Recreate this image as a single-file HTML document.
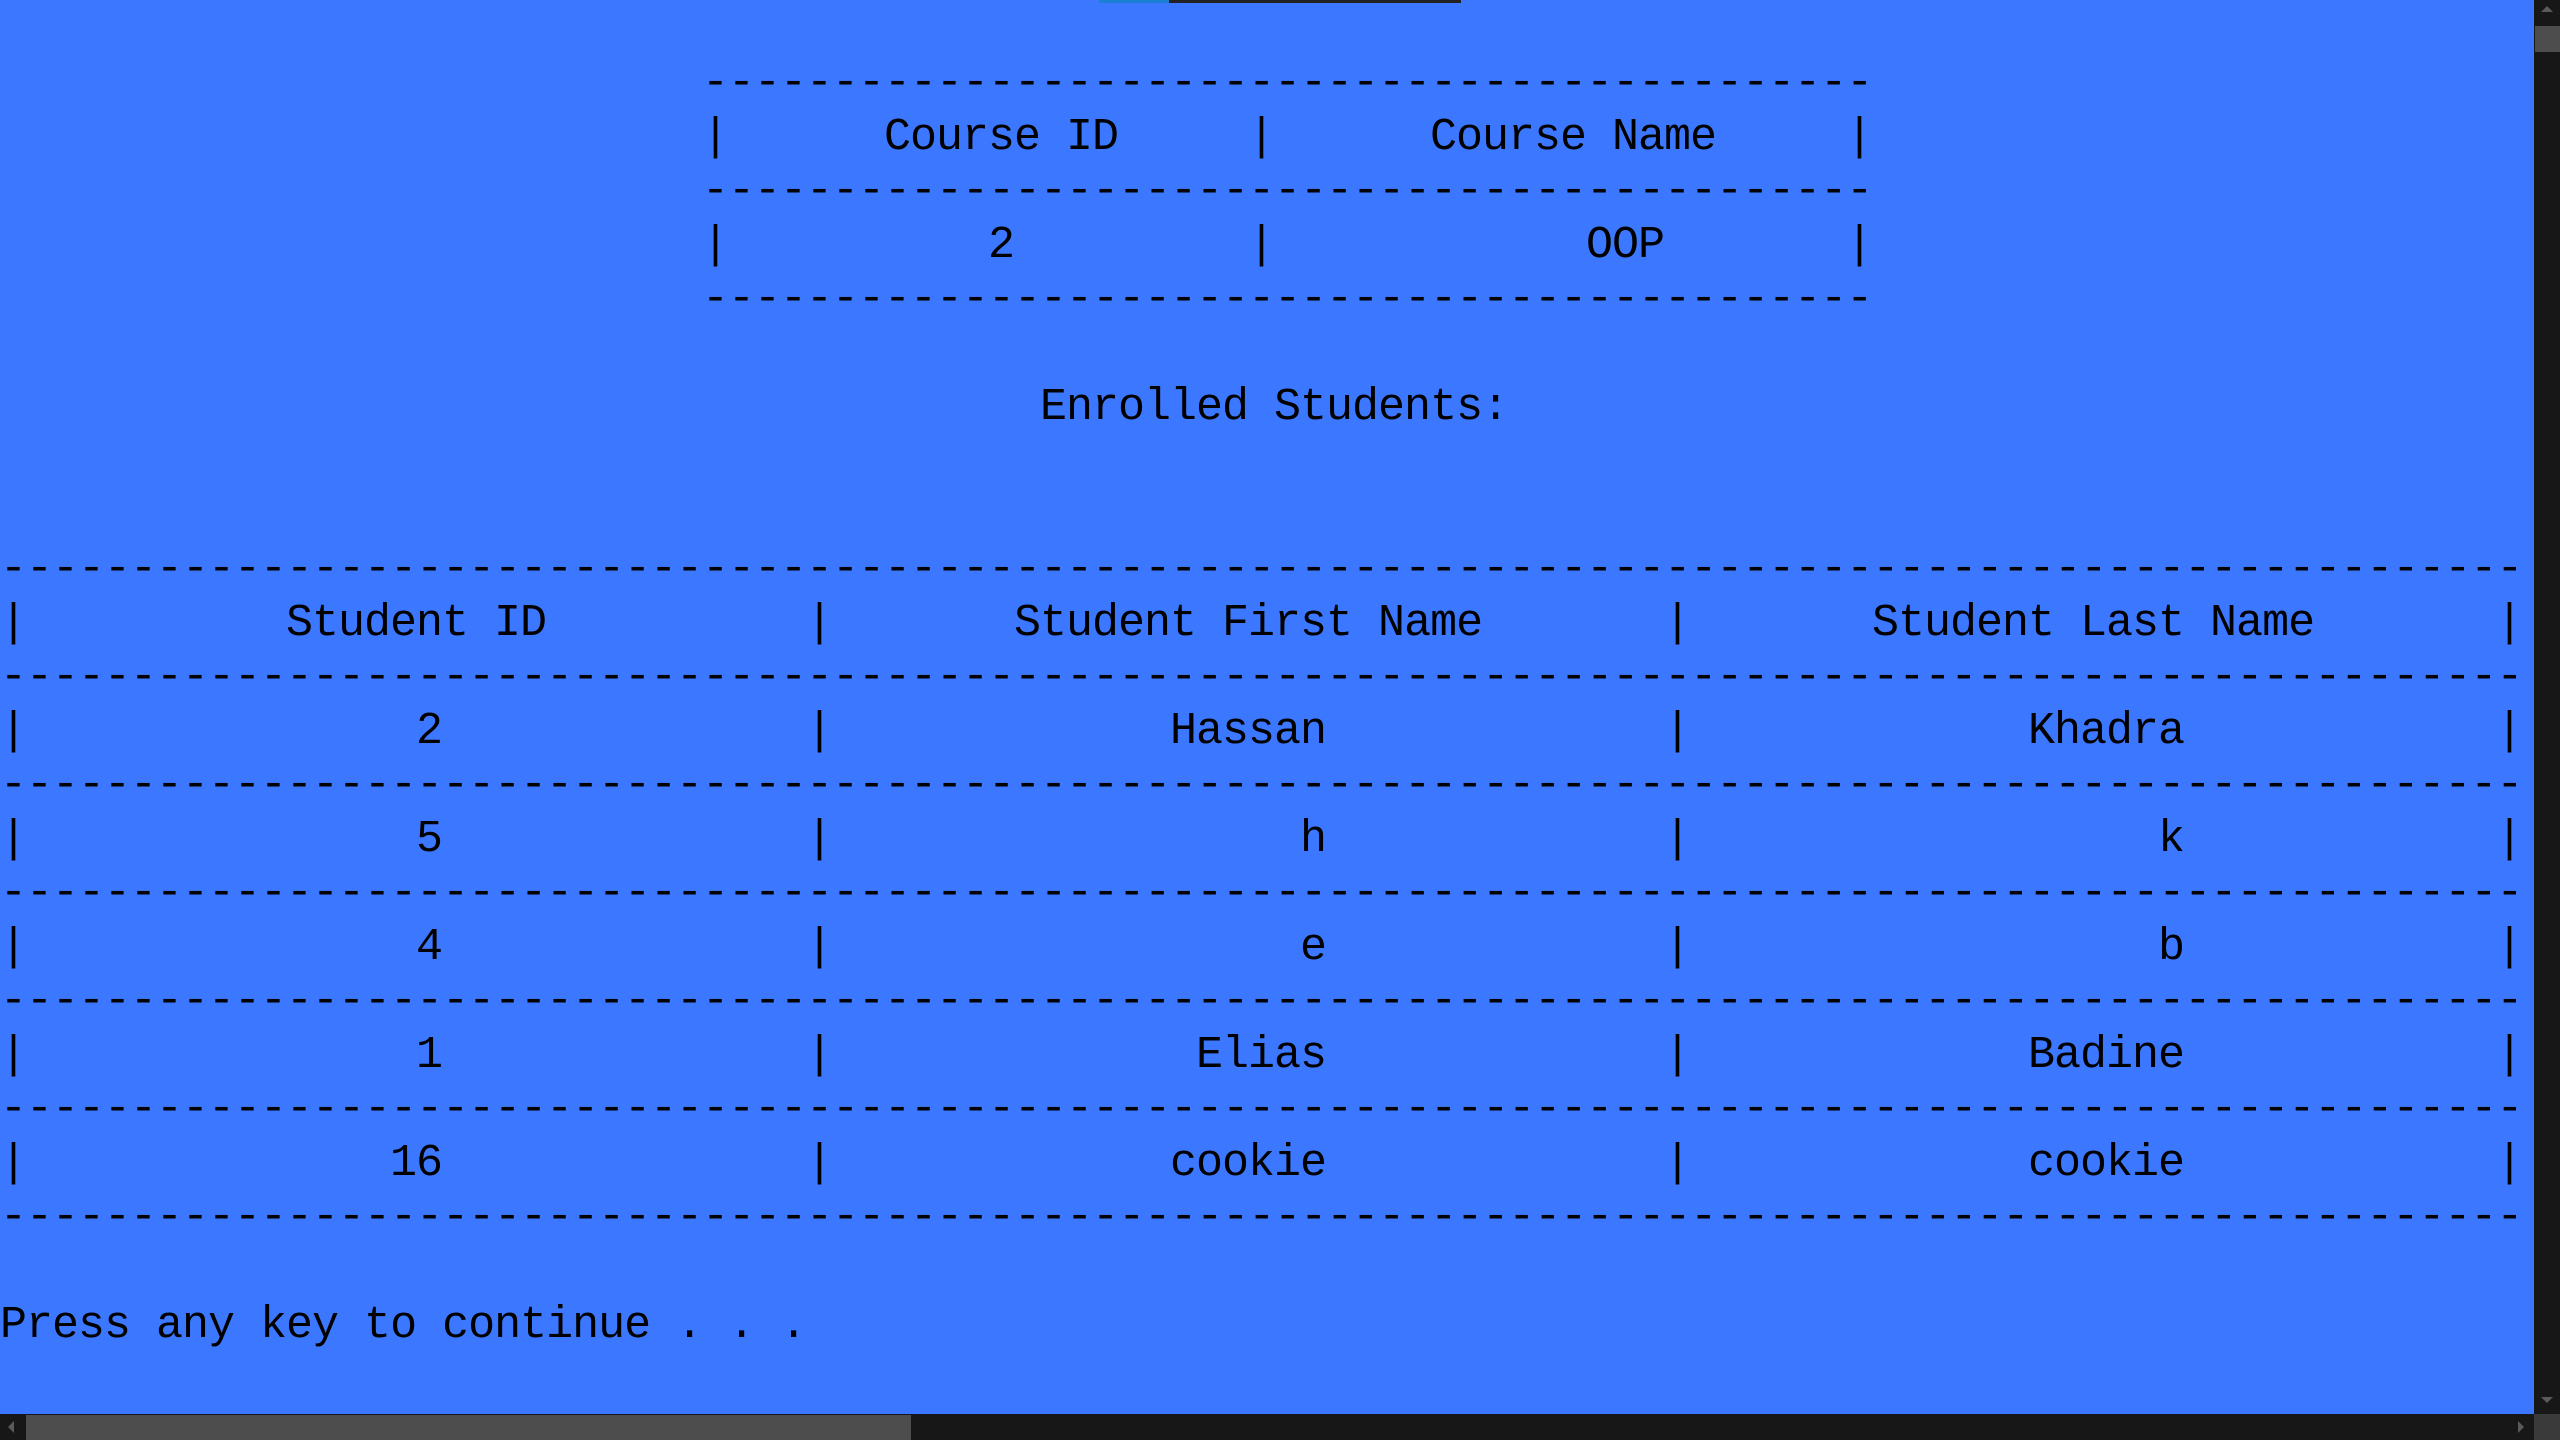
<!DOCTYPE html>
<html><head><meta charset="utf-8"><style>
html,body{margin:0;padding:0;width:2560px;height:1440px;overflow:hidden;background:#3c78ff;}
.t{position:absolute;font-family:"Liberation Mono",monospace;font-size:45px;letter-spacing:-1px;line-height:54px;height:54px;color:#000;white-space:pre;}
</style></head><body>
<div style="position:absolute;left:1099px;top:0;width:70px;height:3px;background:#1c7fd6"></div>
<div style="position:absolute;left:1169px;top:0;width:292px;height:3px;background:#222"></div>
<div id="c"></div>
<script>
var items=[
[1,27,"---------------------------------------------"],
[2,27,"|"],[2,34,"Course ID"],[2,48,"|"],[2,55,"Course Name"],[2,71,"|"],
[3,27,"---------------------------------------------"],
[4,27,"|"],[4,38,"2"],[4,48,"|"],[4,61,"OOP"],[4,71,"|"],
[5,27,"---------------------------------------------"],
[7,40,"Enrolled Students:"],
[11,11,"Student ID"],[11,39,"Student First Name"],[11,72,"Student Last Name"],
[13,16,"2"],[13,45,"Hassan"],[13,78,"Khadra"],
[15,16,"5"],[15,50,"h"],[15,83,"k"],
[17,16,"4"],[17,50,"e"],[17,83,"b"],
[19,16,"1"],[19,46,"Elias"],[19,78,"Badine"],
[21,15,"16"],[21,45,"cookie"],[21,78,"cookie"],
[24,0,"Press any key to continue . . ."]
];
var d="";for(var i=0;i<97;i++)d+="-";
for(var r=10;r<=22;r+=2)items.push([r,0,d]);
for(var r=11;r<=21;r+=2){items.push([r,0,"|"],[r,31,"|"],[r,64,"|"],[r,96,"|"]);}
var h="";
items.forEach(function(it){
var s=it[2].replace(/&/g,"&amp;");
h+='<div class="t" style="top:'+(it[0]*54+3)+'px;left:'+(it[1]*26)+'px">'+s+'</div>';
});
document.getElementById("c").innerHTML=h;
</script>
<div style="position:absolute;left:2534px;top:0;width:26px;height:1414px;background:#171717"></div>
<div style="position:absolute;left:2535px;top:26px;width:25px;height:26px;background:#4d4d4d"></div>
<div style="position:absolute;left:2541px;top:6px;width:0;height:0;border-left:6px solid transparent;border-right:6px solid transparent;border-bottom:6px solid #5a5a5a"></div>
<div style="position:absolute;left:2541px;top:1397px;width:0;height:0;border-left:6px solid transparent;border-right:6px solid transparent;border-top:6px solid #5a5a5a"></div>
<div style="position:absolute;left:0;top:1414px;width:2534px;height:26px;background:#171717"></div>
<div style="position:absolute;left:26px;top:1415px;width:885px;height:25px;background:#4d4d4d"></div>
<div style="position:absolute;left:2534px;top:1414px;width:26px;height:26px;background:#3a3a3a"></div>
<div style="position:absolute;left:8px;top:1421px;width:0;height:0;border-top:6px solid transparent;border-bottom:6px solid transparent;border-right:6px solid #5a5a5a"></div>
<div style="position:absolute;left:2518px;top:1421px;width:0;height:0;border-top:6px solid transparent;border-bottom:6px solid transparent;border-left:6px solid #5a5a5a"></div>
</body></html>
